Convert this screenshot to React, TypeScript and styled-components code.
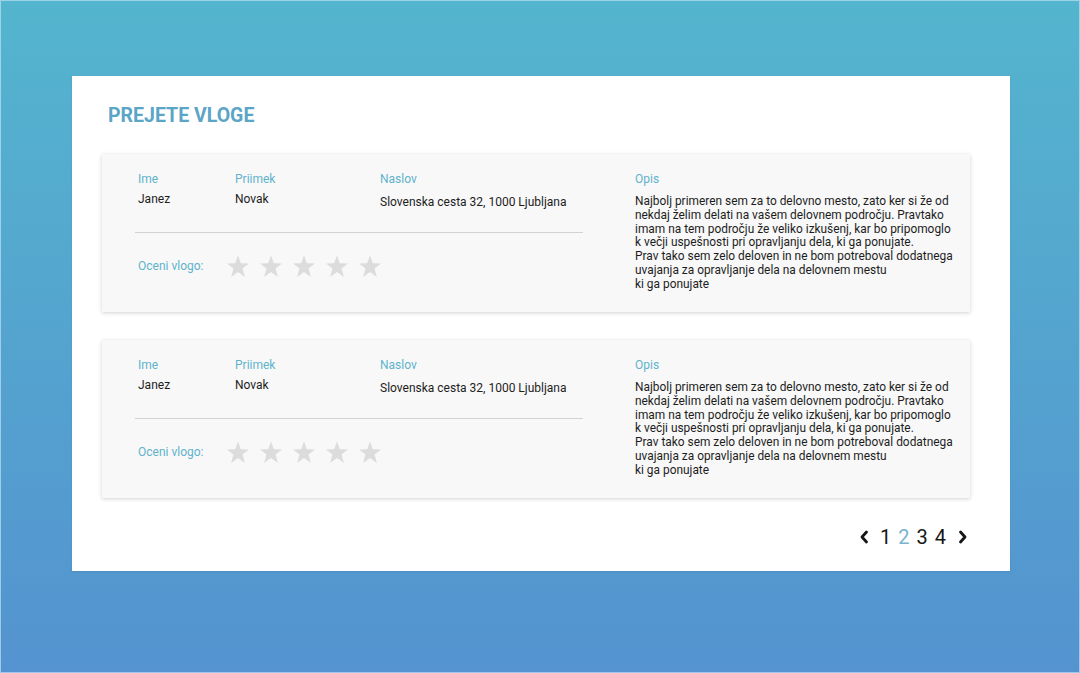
import React from "react";
import styled, { createGlobalStyle } from "styled-components";

const Global = createGlobalStyle`
  html, body { margin: 0; padding: 0; }
  body { font-family: Roboto, "Noto Sans", Arial, sans-serif; }
  * { box-sizing: border-box; }
`;

const Page = styled.div`
  width: 1080px;
  height: 673px;
  background: linear-gradient(180deg, #54b5ce 0%, #5493d0 100%);
  box-shadow: inset 0 0 0 1px rgba(190, 225, 245, 0.7);
  padding: 76px 70px 0 72px;
`;

const Panel = styled.main`
  background: #ffffff;
  height: 495px;
  padding: 28px 40px 0 30px;
  box-shadow: 0 1px 2px rgba(0, 0, 0, 0.08);
`;

const Title = styled.h1`
  margin: 0 0 0 6px;
  font-size: 19.5px;
  line-height: 24px;
  font-weight: 700;
  color: #5ba5c6;
`;

const List = styled.div`
  margin-top: 26px;
  display: flex;
  flex-direction: column;
  gap: 28px;
`;

const Card = styled.section`
  height: 158px;
  background: #f8f8f8;
  box-shadow: 0 1px 4px rgba(0, 0, 0, 0.18);
  padding: 18px 10px 0 33px;
  display: grid;
  grid-template-columns: 448px 1fr;
  column-gap: 52px;
`;

const Left = styled.div`
  display: flex;
  flex-direction: column;
`;

const Fields = styled.div`
  display: grid;
  grid-template-columns: 97px 145px 1fr;
  padding-left: 3px;
`;

const Label = styled.div`
  font-size: 12px;
  line-height: 14px;
  color: #5fb3cc;
`;

const Value = styled.div<{ $shift?: number }>`
  margin-top: ${(p) => 5 + (p.$shift ?? 0)}px;
  font-size: 12px;
  line-height: 16px;
  color: #1d1d1d;
  white-space: nowrap;
`;

const Divider = styled.hr`
  margin: 22px 0 0;
  border: 0;
  border-top: 1px solid #d2d2d2;
  height: 0;
`;

const RatingRow = styled.div`
  margin-top: 21px;
  padding-left: 3px;
  display: flex;
  align-items: center;
  height: 24px;
`;

const RatingLabel = styled.span`
  font-size: 12px;
  color: #5fb3cc;
  width: 88px;
`;

const Stars = styled.div`
  display: flex;
  gap: 9px;
`;

const Star = styled.svg`
  width: 24px;
  height: 23px;
  fill: #dcdcdc;
  display: block;
`;

const Opis = styled.div`
  display: flex;
  flex-direction: column;
`;

const OpisText = styled.p`
  margin: 9px 0 0;
  font-size: 11.9px;
  line-height: 13.75px;
  color: #1d1d1d;
  white-space: nowrap;
`;

const Pager = styled.nav`
  margin-top: 28px;
  padding-right: 2px;
  display: flex;
  justify-content: flex-end;
  align-items: center;
  gap: 7px;
`;

const PageNum = styled.span<{ $active?: boolean }>`
  font-size: 20px;
  line-height: 22px;
  color: ${(p) => (p.$active ? "#7ab2d0" : "#161616")};
`;

const Chevron = styled.svg<{ $side: "l" | "r" }>`
  width: 10px;
  height: 14px;
  display: block;
  margin: ${(p) => (p.$side === "l" ? "0 4px 0 0" : "0 0 0 5px")};
`;

const StarIcon = () => (
  <Star viewBox="0 0 24 23">
    <polygon points="12,0.5 14.8,8.3 23,8.5 16.5,13.6 18.9,21.9 12,17 5.1,21.9 7.5,13.6 1,8.5 9.2,8.3" />
  </Star>
);

const opisLines = [
  "Najbolj primeren sem za to delovno mesto, zato ker si že od",
  "nekdaj želim delati na vašem delovnem področju.  Pravtako",
  "imam na tem področju že veliko izkušenj, kar bo pripomoglo",
  "k večji uspešnosti pri opravljanju dela, ki ga ponujate.",
  "Prav tako sem zelo deloven in ne bom potreboval dodatnega",
  "uvajanja za opravljanje dela na delovnem mestu",
  "ki ga ponujate",
];

const ApplicationCard = () => (
  <Card>
    <Left>
      <Fields>
        <div>
          <Label>Ime</Label>
          <Value>Janez</Value>
        </div>
        <div>
          <Label>Priimek</Label>
          <Value>Novak</Value>
        </div>
        <div>
          <Label>Naslov</Label>
          <Value $shift={3}>Slovenska cesta 32, 1000 Ljubljana</Value>
        </div>
      </Fields>
      <Divider />
      <RatingRow>
        <RatingLabel>Oceni vlogo:</RatingLabel>
        <Stars>
          {[0, 1, 2, 3, 4].map((i) => (
            <StarIcon key={i} />
          ))}
        </Stars>
      </RatingRow>
    </Left>
    <Opis>
      <Label>Opis</Label>
      <OpisText>
        {opisLines.map((l, i) => (
          <React.Fragment key={i}>
            {l}
            {i < opisLines.length - 1 && <br />}
          </React.Fragment>
        ))}
      </OpisText>
    </Opis>
  </Card>
);

export default function App() {
  return (
    <>
      <Global />
      <Page>
        <Panel>
          <Title>PREJETE VLOGE</Title>
          <List>
            <ApplicationCard />
            <ApplicationCard />
          </List>
          <Pager>
            <Chevron $side="l" viewBox="0 0 10 14">
              <polyline points="7.5,2 3,7 7.5,12" fill="none" stroke="#161616" strokeWidth="2.8" strokeLinecap="round" strokeLinejoin="round" />
            </Chevron>
            <PageNum>1</PageNum>
            <PageNum $active>2</PageNum>
            <PageNum>3</PageNum>
            <PageNum>4</PageNum>
            <Chevron $side="r" viewBox="0 0 10 14">
              <polyline points="2.5,2 7,7 2.5,12" fill="none" stroke="#161616" strokeWidth="2.8" strokeLinecap="round" strokeLinejoin="round" />
            </Chevron>
          </Pager>
        </Panel>
      </Page>
    </>
  );
}
